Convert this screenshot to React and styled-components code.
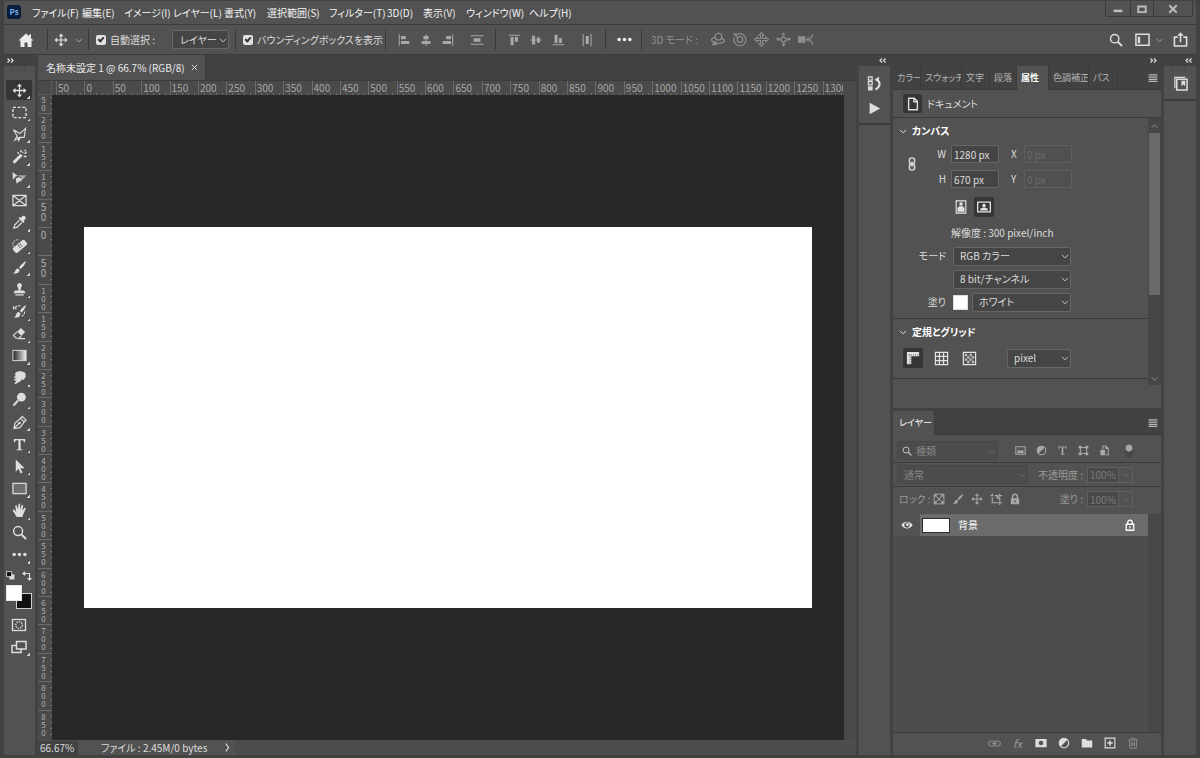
import React from "react";
import styled, { createGlobalStyle, css } from "styled-components";

const c = {
  panel: "#525252",
  dark: "#424242",
  line: "#3b3b3b",
  field: "#454545",
  ruler: "#4a4a4a",
  text: "#dcdcdc",
  dim: "#858585",
  edge: "#666666",
};

const Global = createGlobalStyle`
  *, *::before, *::after { box-sizing: border-box; }
  body { margin: 0; background: #333; }
  body, button, input, select {
    font-family: "Noto Sans CJK JP", "Noto Sans", sans-serif;
    font-size: 10px;
    line-height: 14px;
    font-feature-settings: "palt";
    color: ${c.text};
  }
  h2 { margin: 0; font-size: 10px; line-height: 14px; color: #fff; }
`;

const PlainButton = styled.button`
  display: flex;
  align-items: center;
  justify-content: center;
  border: 0;
  padding: 0;
  background: none;
  white-space: nowrap;
`;

/* ---------- window frame ---------- */
const Window = styled.div`
  display: flex;
  flex-direction: column;
  height: 100vh;
  min-height: 700px;
  padding: 1px 4px 3px;
  background: ${c.dark};
  overflow: hidden;
`;
const MenuBar = styled.header`
  display: flex;
  flex: 0 0 24px;
  padding-left: 3px;
  background: ${c.panel};
  border-bottom: 1px solid ${c.line};
`;
const Logo = styled.svg`
  width: 14px;
  height: 14px;
  margin: 4px 11px 0 0;
`;
const Menus = styled.nav`
  display: flex;
  flex: 1;
`;
const MenuItem = styled(PlainButton)`
  flex: 0 0 ${(p) => p.$w}px;
  justify-content: flex-start;
  color: #f4f4f4;
`;
const WindowButtons = styled.div`
  display: flex;
  height: 16px;
  margin-right: 3px;
  border: 1px solid ${c.line};
  border-top: 0;
  border-radius: 0 0 2px 2px;
`;
const WindowButton = styled(PlainButton)`
  width: ${(p) => p.$w}px;
  color: #bdbdbd;
  & + & { border-left: 1px solid ${c.line}; }
`;

/* ---------- options bar ---------- */
const OptionsBar = styled.div`
  display: flex;
  flex: 0 0 30px;
  background: ${c.panel};
  border-bottom: 1px solid ${c.line};
`;
const Group = styled.div`
  display: flex;
  align-items: center;
  flex: ${(p) => (p.$w ? `0 0 ${p.$w}px` : "1 0 auto")};
  padding-left: ${(p) => p.$pad || 0}px;
  gap: ${(p) => p.$gap || 0}px;
  justify-content: ${(p) => (p.$center ? "center" : "flex-start")};
  position: relative;
  white-space: nowrap;
  &::after {
    content: "";
    display: ${(p) => (p.$w ? "block" : "none")};
    position: absolute;
    right: 0;
    top: 4px;
    bottom: 4px;
    width: 1px;
    background: ${c.line};
  }
`;
const IconButton = styled(PlainButton)`
  width: ${(p) => p.$w || 22}px;
  height: 20px;
  flex: none;
  color: ${(p) => p.$color || "#a8a8a8"};
  margin-left: ${(p) => p.$ml || 0}px;
`;
const Check = styled.label`
  display: flex;
  align-items: center;
  gap: 4px;
`;
const CheckBox = styled.input`
  appearance: none;
  position: relative;
  width: 10px;
  height: 10px;
  margin: 0;
  border-radius: 2px;
  background: #e2e2e2;
  &:checked::after {
    content: "";
    position: absolute;
    left: 3px;
    top: 1px;
    width: 4px;
    height: 6px;
    border: solid #333;
    border-width: 0 2px 2px 0;
    transform: rotate(42deg);
  }
`;
const ModeLabel = styled.span`
  width: 55px;
  color: #8f8f8f;
`;
const BarRight = styled.div`
  display: flex;
  align-items: center;
`;

/* ---------- body ---------- */
const Body = styled.div`
  display: flex;
  flex: 1;
  min-height: 0;
  gap: 3px;
`;
const Column = styled.div`
  display: flex;
  flex-direction: column;
  flex: 0 0 ${(p) => p.$w}px;
  min-height: 0;
`;
const Collapse = styled(PlainButton)`
  flex: 0 0 11px;
  justify-content: ${(p) => (p.$left ? "flex-start" : "flex-end")};
  padding: 0 4px 0 3px;
  color: #e0e0e0;
`;
const Grip = styled.div`
  width: 16px;
  height: 3px;
  margin: 2px auto 0;
  background: repeating-linear-gradient(90deg, #444 0 1px, #5a5a5a 1px 2px);
`;
const Toolbar = styled.div`
  flex: 1;
  display: flex;
  flex-direction: column;
  background: ${c.panel};
`;
const Tools = styled.div`
  display: grid;
  grid-template-rows: repeat(22, 1fr);
  height: 487px;
  margin-top: 8px;
`;
const Tool = styled(PlainButton)`
  position: relative;
  width: 26px;
  min-height: 20px;
  margin: 1px 0 1px 2px;
  border-radius: 2px;
  color: #dedede;
  background: ${(p) => (p.$active ? "#353535" : "none")};
  &::after {
    content: "";
    display: ${(p) => (p.$more ? "block" : "none")};
    position: absolute;
    right: 2px;
    bottom: 1px;
    width: 3px;
    height: 3px;
    background: linear-gradient(135deg, transparent 50%, #d0d0d0 50%);
  }
`;
const MiniRow = styled.div`
  display: flex;
  justify-content: space-between;
  width: 26px;
  margin: 5px 0 4px 2px;
  color: #dedede;
`;
const Swatches = styled.div`
  position: relative;
  width: 26px;
  height: 24px;
  margin: 0 0 5px 2px;
`;
const Swatch = styled.button`
  position: absolute;
  width: 16px;
  height: 16px;
  padding: 0;
  ${(p) =>
    p.$front
      ? css`left: 0; top: 0; background: #fff; border: 1px solid #e8e8e8;`
      : css`right: 0; bottom: 0; background: #111; border: 1px solid #d0d0d0;`}
`;

/* ---------- document ---------- */
const Document = styled.main`
  flex: 1;
  min-width: 0;
  display: flex;
  flex-direction: column;
`;
const DocTabs = styled.div`
  flex: 0 0 25px;
  display: flex;
`;
const DocTab = styled.div`
  display: flex;
  align-items: center;
  gap: 6px;
  width: 168px;
  padding-left: 8px;
  background: ${c.panel};
  border-right: 1px solid ${c.line};
  color: #ececec;
  white-space: nowrap;
`;
const RulerRow = styled.div`
  flex: 0 0 15px;
  min-height: 0;
  display: flex;
  padding-right: 13px;
  background: ${c.ruler};
  border-top: 1px solid ${c.line};
`;
const Corner = styled.div`
  flex: 0 0 14px;
  border-right: 1px dotted #6a6a6a;
  border-bottom: 1px dotted #6a6a6a;
`;
const HRuler = styled.div`
  flex: 1;
  min-width: 0;
  overflow: hidden;
  padding-left: 4px;
`;
const HMarks = styled.div`
  display: grid;
  grid-template-columns: repeat(28, 1fr);
  width: 795px;
  height: 100%;
`;
const HMark = styled.span`
  min-width: 0;
  padding-left: 1px;
  line-height: 14px;
  color: #a6a6a6;
  border-left: 1px solid #6c6c6c;
  background: repeating-linear-gradient(90deg, transparent 0 5px, #707070 5px 6px) 0 100% / 100% 2px no-repeat;
`;
const Work = styled.div`
  flex: 1;
  display: flex;
  min-height: 0;
`;
const VRuler = styled.div`
  flex: 0 0 14px;
  display: flex;
  flex-direction: column;
  justify-content: flex-end;
  overflow: hidden;
  padding-bottom: 2px;
  background: ${c.ruler};
`;
const VMarks = styled.div`
  flex: none;
  display: grid;
  grid-template-rows: repeat(23, 1fr);
  height: 653px;
`;
const VMark = styled.div`
  min-height: 0;
  padding: 2px 0 0 0;
  color: #b0b0b0;
  border-top: 1px solid #6c6c6c;
  background: repeating-linear-gradient(180deg, transparent 0 5px, #707070 5px 6px) 100% 0 / 2px 100% no-repeat;
  span {
    display: block;
    width: 10px;
    writing-mode: vertical-rl;
    text-orientation: upright;
    line-height: 10px;
    font-size: ${(p) => (p.$tight ? 8 : 10)}px;
  }
`;
const Stage = styled.div`
  flex: 1;
  display: flex;
  align-items: center;
  justify-content: center;
  background: #282828;
`;
const Artboard = styled.div`
  width: 728px;
  max-width: 92%;
  aspect-ratio: 728 / 381;
  background: #fff;
`;
const ScrollGutter = styled.div`
  flex: 0 0 12px;
  background: ${c.ruler};
`;
const Status = styled.footer`
  flex: 0 0 15px;
  display: flex;
  align-items: center;
  background: #4d4d4d;
`;
const Zoom = styled.span`
  width: 40px;
  padding-left: 2px;
  background: ${c.dark};
`;
const FileInfo = styled.button`
  display: flex;
  justify-content: space-between;
  align-items: center;
  width: 157px;
  height: 100%;
  padding: 0 3px 0 23px;
  border: 0;
  background: ${c.panel};
`;

/* ---------- panels ---------- */
const Strip = styled.div`
  flex: ${(p) => (p.$h ? `0 0 ${p.$h}px` : 1)};
  background: ${c.panel};
  border-bottom: ${(p) => (p.$h ? `2px solid ${c.line}` : 0)};
  display: flex;
  flex-direction: column;
  align-items: center;
`;
const StripButton = styled(PlainButton)`
  height: 25px;
  width: 24px;
  color: #dedede;
`;
const Panel = styled.section`
  display: flex;
  flex-direction: column;
  flex: ${(p) => (p.$h ? `0 0 ${p.$h}px` : 1)};
  min-height: 0;
  margin-bottom: ${(p) => (p.$h ? 3 : 0)}px;
  background: ${c.panel};
`;
const Tabs = styled.div`
  display: flex;
  flex: 0 0 24px;
  background: ${c.dark};
  border-bottom: 1px solid ${c.line};
`;
const Tab = styled.button`
  flex: 0 0 ${(p) => p.$w}px;
  padding: 0 0 0 ${(p) => (p.$plain ? 6 : 4)}px;
  overflow: hidden;
  white-space: nowrap;
  text-align: left;
  font-size: 9px;
  border: 0;
  border-right: 1px solid ${c.line};
  margin-bottom: ${(p) => (p.$active ? -1 : 0)}px;
  background: ${(p) => (p.$active ? c.panel : "none")};
  color: ${(p) => (p.$active ? "#fff" : "#b4b4b4")};
  font-weight: ${(p) => (p.$active && !p.$plain ? 700 : 400)};
`;
const PanelMenu = styled(PlainButton)`
  margin-left: auto;
  width: 17px;
  color: #b8b8b8;
`;
const DocHead = styled.div`
  flex: 0 0 28px;
  display: flex;
  align-items: center;
  gap: 5px;
  padding-left: 10px;
  border-bottom: 1px solid ${c.line};
`;
const IconTile = styled.span`
  display: flex;
  align-items: center;
  justify-content: center;
  width: 19px;
  height: 19px;
  border-radius: 2px;
  background: #353535;
`;
const Scroller = styled.div`
  display: flex;
  height: 267px;
`;
const Sections = styled.div`
  flex: 1;
  min-width: 0;
`;
const Section = styled.div`
  padding: 5px 0 0 5px;
  height: ${(p) => p.$h}px;
  border-bottom: 1px solid ${c.line};
`;
const Heading = styled.div`
  display: flex;
  align-items: center;
  gap: 4px;
  height: 15px;
`;
const CanvasGrid = styled.div`
  display: grid;
  grid-template-columns: 28px 25px auto;
  align-items: center;
  padding-top: 1px;
`;
const LinkCell = styled(PlainButton)`
  grid-row: 1 / span 2;
  color: #dedede;
`;
const RowLabel = styled.label`
  justify-self: end;
  padding-right: 5px;
  white-space: nowrap;
  grid-column: 2;
`;
const Cell = styled.div`
  grid-column: 3;
  display: flex;
  align-items: center;
  gap: ${(p) => p.$gap || 0}px;
  height: ${(p) => p.$h}px;
  padding-left: ${(p) => p.$pad || 0}px;
`;
const Field = styled.input`
  width: 48px;
  height: 18px;
  padding: 0 2px;
  border: 1px solid ${c.edge};
  border-radius: 1px;
  background: ${c.field};
  &:disabled {
    color: #6c6c6c;
    background: #505050;
    border-color: #5e5e5e;
  }
`;
const AxisLabel = styled.label`
  width: 25px;
  padding-left: 12px;
`;
const OrientButton = styled(PlainButton)`
  width: 20px;
  height: 20px;
  border-radius: 2px;
  color: #e2e2e2;
  background: ${(p) => (p.$active ? "#353535" : "none")};
`;
const ColorChip = styled.button`
  width: 15px;
  height: 15px;
  padding: 0;
  border: 1px solid #ddd;
  background: #fff;
`;
const SelectBox = styled.span`
  display: grid;
  align-items: center;
  flex: none;
  width: ${(p) => p.$w}px;
  height: 19px;
  svg {
    grid-area: 1 / 1;
    justify-self: end;
    margin-right: 1px;
    pointer-events: none;
    color: ${(p) => (p.$dim ? "#6e6e6e" : "#c4c4c4")};
  }
  select {
    grid-area: 1 / 1;
    appearance: none;
    width: 100%;
    height: 19px;
    padding: 0 0 0 ${(p) => p.$pad || 6}px;
    border: 1px solid ${(p) => (p.$dim ? "#484848" : c.edge)};
    border-radius: 2px;
    background: ${(p) => (p.$dim ? "#4c4c4c" : c.field)};
    color: ${(p) => (p.$dim ? c.dim : c.text)};
    opacity: 1;
  }
  .lead { justify-self: start; margin-left: 5px; color: #c0c0c0; }
`;
const GridRow = styled.div`
  display: flex;
  align-items: center;
  gap: 8px;
  margin: 9px 0 0 5px;
`;
const GridSelect = styled.div`
  margin-left: 20px;
`;
const ScrollBar = styled.div`
  flex: 0 0 13px;
  display: flex;
  flex-direction: column;
  align-items: center;
  padding: 4px 0 2px;
  background: #464646;
  color: #9a9a9a;
`;
const Thumb = styled.div`
  width: 11px;
  height: 162px;
  margin: 2px 0 auto;
  background: #696969;
`;
const LayerRow = styled.div`
  flex: 0 0 ${(p) => p.$h}px;
  display: flex;
  align-items: center;
  padding: ${(p) => p.$top || 0}px 0 ${(p) => (p.$last ? 3 : 0)}px 4px;
  color: #9a9a9a;
  white-space: nowrap;
  border-bottom: ${(p) => (p.$last ? 0 : `1px solid ${c.line}`)};
`;
const FilterIcons = styled.div`
  display: flex;
  padding-left: 12px;
`;
const Toggle = styled.button`
  width: 8px;
  height: 14px;
  margin: 0 0 0 10px;
  padding: 0;
  border: 0;
  border-radius: 4px;
  background: radial-gradient(circle at 4px 4px, #a5a5a5 0 3px, #474747 4px);
`;
const Amount = styled.label`
  display: flex;
  align-items: center;
  justify-content: flex-end;
  gap: 4px;
  flex: 0 0 ${(p) => p.$w}px;
`;
const AmountInput = styled.input`
  width: 32px;
  height: 16px;
  padding: 0 2px;
  border: 1px solid #606060;
  background: #494949;
  color: #7a7a7a;
`;
const AmountMore = styled(PlainButton)`
  width: 14px;
  height: 16px;
  border: 1px solid #606060;
  border-left: 0;
  color: #6e6e6e;
`;
const LockLabel = styled.span`
  width: 32px;
  padding-left: 2px;
`;
const LayerList = styled.div`
  flex: 1;
  display: flex;
  background: #4d4d4d;
`;
const Layers = styled.div`
  flex: 1;
`;
const Layer = styled.div`
  display: flex;
  height: 22px;
  background: ${c.panel};
`;
const Eye = styled(PlainButton)`
  width: 27px;
  color: #ececec;
`;
const LayerBody = styled.div`
  flex: 1;
  display: flex;
  align-items: center;
  padding: 0 12px 0 2px;
  background: #6b6b6b;
  color: #fff;
`;
const LayerThumb = styled.span`
  width: 28px;
  height: 15px;
  margin-right: 8px;
  background: #fff;
  border: 1px solid #2c2c2c;
`;
const LayerName = styled.span`
  flex: 1;
`;
const ListGutter = styled.div`
  flex: 0 0 13px;
  background: #484848;
`;
const LayerFooter = styled.div`
  flex: 0 0 22px;
  display: flex;
  align-items: center;
  justify-content: flex-end;
  padding: 0 17px 2px 0;
  border-top: 1px solid ${c.line};
`;
const Fx = styled.i`
  font-size: 11px;
`;

/* ---------- icons ---------- */
const Svg = ({ s = 16, children, ...rest }) => (
  <svg width={s} height={s} viewBox="0 0 16 16" fill="currentColor" stroke="none" aria-hidden="true" {...rest}>
    {children}
  </svg>
);
const line = { fill: "none", stroke: "currentColor", strokeWidth: 1.3 };

const Chevron = ({ s = 10, ...rest }) => (
  <Svg s={s} {...rest}><path d="M3 6l5 5 5-5" {...line} strokeWidth="1.6" /></Svg>
);
const Chevrons = ({ right }) => (
  <svg width="7" height="5" viewBox="0 0 7 5" fill="none" stroke="currentColor" strokeWidth="1.2" aria-hidden="true">
    <path d={right ? "M0.5 0.5l2 2-2 2M4 0.5l2 2-2 2" : "M3 0.5l-2 2 2 2M6.5 0.5l-2 2 2 2"} />
  </svg>
);
const Burger = () => <Svg s={10}><path d="M1 2h14v2H1zM1 5.500h14v2H1zM1 9h14v2H1zM1 12.500h14v2H1z" /></Svg>;

const shapes = {
  move: <path d="M8 0.500l2.800 3.200H8.700v3.600h3.600V5.200L15.500 8l-3.200 2.800V8.700H8.700v3.600h2.100L8 15.500l-2.800-3.200h2.100V8.700H3.700v2.100L0.500 8l3.200-2.800v2.100h3.600V3.700H5.200z" />,
  marquee: <path d="M1 2.500h14v11H1z" {...line} strokeWidth="1.500" strokeDasharray="3.200 1.800" />,
  lasso: <path d="M1.500 3L8.500 7 14.500 1.500 13 11H8L3 14l2.500-4.500zM5 9.500L7 14.500l2-3.500" {...line} strokeWidth="1.200" />,
  wand: <><path d="M0.500 13.500L9 5l2.300 2.300-8.500 8.500z" /><path d="M6 3.500L7.500 5M9.500 1v2.500M13.500 5l2-2M12.500 8h3M11 4l1-1M14 0.500v2" {...line} strokeWidth="1.400" /></>,
  slice: <><path d="M0.500 1L6 5 3.500 6 1 9.500zM4 8l4-1.500 2 2.500L5 13.500z" /><path d="M6 4.500h9.500L9 12l-1-3 2-2z" opacity=".6" /></>,
  frame: <path d="M1 2.500h14v11H1zM1 2.500l14 11M15 2.500L1 13.500" {...line} />,
  dropper: <><path d="M10 2.500c1.500-2 3-2 4-1s1 2.500-1 4l-.5.500 1 1-1.500 1.500-5-5 1.500-1.500 1 1z" /><path d="M8 5.500L3 10.500l-1 3.500 3.500-1 5-5" {...line} /></>,
  heal: <><rect x="0.500" y="5.500" width="16" height="7" rx="2" transform="rotate(-40 8.500 9)" /><path d="M6.500 7.500l1 1M8.500 6l1 1M8 9.500l1 1M10 8l1 1" stroke="#525252" strokeWidth="1.300" /><path d="M1.500 9a5 5 0 0 1 6-7" {...line} strokeWidth="1.100" strokeDasharray="1.500 1.200" /></>,
  brush: <path d="M15 1c-3 1.500-6 4.500-7.500 7l1.500 1.500C11.500 8 14 4.500 15 1zM6.500 9c-2 0-2.500 1-3 2.500C3.200 12.800 2.500 13.500 1 14c3 1 7 .5 7-3.500z" />,
  stamp: <path d="M8 1a2.800 2.800 0 0 0-1.500 5L7 9H3.500L2 10.500V12h12v-1.500L12.500 9H9l.5-3A2.800 2.800 0 0 0 8 1zM3.500 13h9v1.500h-9z" />,
  history: <><path d="M15 1c-3 1.500-5 4-6.500 6.500L10 9C12 7.500 14 5 15 1zM7.500 8.500c-2 0-2.500 1-3 2.500C4.200 12.800 3.500 13.500 2 14c3 1 7 .5 7-4z" /><path d="M1.500 5.500L1.500 2M2 5h3.500M3 4a6 6 0 0 1 6-2M13.500 8c0 2-1 4-3 5" {...line} strokeWidth="1.200" strokeDasharray="3 1" /></>,
  eraser: <><path d="M9.500 2L14 6.500 10 10.500 5.500 6z" /><path d="M5.500 6l-4 4 3 3h3L10 10.500M7 13.500h7" {...line} strokeWidth="1.200" /></>,
  gradient: <><defs><linearGradient id="toolGradient"><stop offset="0" stopColor="#222" /><stop offset="1" stopColor="#eee" /></linearGradient></defs><rect x="1" y="2.500" width="14" height="11" fill="url(#toolGradient)" stroke="currentColor" /></>,
  smudge: <path d="M4 2.500C6 1 9 1 11 1.500c2 .5 3.500 1.500 3.500 3v3l-2 3-2-.5-1.500 2-1 .5L4 15l-1.500-.5L5 11l-2 .5-1-1L5 8l-2.500.5-.5-1L4.500 6 3 5.500z" />,
  dodge: <><circle cx="10" cy="5.500" r="4.700" /><path d="M6.500 9L1.500 14.500" stroke="currentColor" strokeWidth="2.200" /></>,
  pen: <><path d="M2 14.500l1.200-6L9 3.500l4 4-4.500 6zM9 3.500L11 1.500l4 4-2 2M2 14.500L7.500 9" {...line} /><circle cx="8" cy="8.500" r="1.400" /></>,
  type: <path d="M2 2h12v3.500h-1.200C12.500 4 12 3.400 10.500 3.400H9.200v8.800c0 .8.400 1 2 1.100V14H4.800v-.7c1.600-.1 2-.3 2-1.100V3.400H5.500C4 3.400 3.500 4 3.200 5.500H2z" />,
  arrow: <path d="M4 0.500v13l3-3L9.200 15.500l2-1L9 9.800h4.500z" />,
  rect: <rect x="1" y="2.500" width="14" height="11" {...line} fill="#6e6e6e" />,
  hand: <path d="M5 15L1 8.500c-.6-1.200 1-2 1.800-1L4.500 9.500 3.500 3.500c-.1-1.200 1.500-1.400 1.800-.2L6.500 7 6.800 1.500c.1-1.200 1.800-1.200 1.800 0L8.800 7l1.400-4.500c.4-1.200 1.900-.8 1.700.4L11 8l2-2.500c.9-.9 2 0 1.500 1L12 12l-1 3z" />,
  zoom: <><circle cx="6.500" cy="6.500" r="4.800" {...line} strokeWidth="1.600" /><path d="M10 10l5 5" stroke="currentColor" strokeWidth="2.200" /></>,
  dots: <><circle cx="2.300" cy="8" r="1.900" /><circle cx="8" cy="8" r="1.900" /><circle cx="13.700" cy="8" r="1.900" /></>,
  quickMask: <><rect x="1.500" y="2.500" width="13" height="11" {...line} /><circle cx="8" cy="8" r="3.300" {...line} strokeDasharray="1.500 1" /></>,
  screenMode: <><rect x="1" y="6.500" width="9" height="7" {...line} strokeWidth="1.500" /><rect x="5.500" y="2.500" width="9.500" height="7.500" {...line} strokeWidth="1.500" fill="#525252" /></>,
  home: <path d="M8 1.500L0.500 8.500h2V15h4v-4.500h3V15h4V8.500h2L13 6.200V2.500h-2v1.800z" />,
  alignL: <path d="M2 1.500h1.200v13H2zM4.500 3.500H10v3.500H4.500zM4.500 9H14v3.500H4.500z" />,
  alignC: <path d="M7.400 1.500h1.200v2H11V7H8.600v2H13v3.500H8.600v2H7.400v-2H3V9h4.400V7H5V3.500h2.400z" />,
  alignR: <path d="M12.800 1.500H14v13h-1.200zM6 3.500h5.500V7H6zM2 9h9.500v3.500H2z" />,
  distH: <path d="M0.500 2.500h15v1.200h-15zM4 6h8v4H4zM0.500 12.300h15v1.200h-15z" />,
  alignT: <path d="M2 2h13v1.200H2zM4 4.500h3.500V14H4zM9 4.500h3.500V10H9z" />,
  alignM: <path d="M3.500 3H7v4.400h2V5h3.500v2.400h2v1.200h-2V11H9V8.600H7V13H3.500V8.600h-2V7.400h2z" />,
  alignB: <path d="M2 12.800h13V14H2zM4 2h3.500v9.500H4zM9 6h3.500v5.500H9z" />,
  distV: <path d="M3 1h1.200v14H3zM6.500 3.500h3.500v9H6.500zM12 1h1.200v14H12z" />,
  orbit: <><circle cx="9" cy="5" r="3.500" {...line} /><path d="M5.500 5.500C1 6.500 0 9.500 4.500 11c3 1 8 1.200 10-.2 1.800-1.500.5-3.300-2-4" {...line} strokeWidth="1.400" /><path d="M2 14l6.500-.5L4.500 9z" /></>,
  roll: <><circle cx="8.500" cy="8" r="3" {...line} /><path d="M6 2.200A6.500 6.500 0 1 1 2.500 5.500" {...line} /><path d="M0.500 1.500h5v4.500z" /></>,
  pan: <path d="M8 0.500L10.500 3.500H9v3.500h3.500V5.500L15.500 8l-3 2.500V9H9v3.500h1.500L8 15.500l-2.500-3H7V9H3.500v1.500L0.500 8l3-2.500V7H7V3.500H5.500z" {...line} strokeWidth="1.100" />,
  slide: <><path d="M8 4.500L11.500 8 8 11.500 4.500 8z" {...line} /><path d="M8 0.500L10.300 3H5.700zM8 15.500l-2.500-3h5zM0 6.500l4-.5-1.500 4zM16 6.500L12 6l1.500 4z" /></>,
  camera: <><path d="M0 4.500h8v7H0zM8.500 8l3-3v6z" /><path d="M15.500 2.500v1.500M15.500 12v1.500M15.500 3.500L12.500 8l3 4.500" {...line} /></>,
  workspace: <><path d="M1 2.500h14v11.500H1z" {...line} strokeWidth="1.600" /><path d="M3 5h2.500v7H3z" /></>,
  share: <><path d="M5 5.500H1.500V15h13V5.500H11" {...line} strokeWidth="1.700" /><path d="M8 11V3" {...line} strokeWidth="1.700" /><path d="M4.500 4L8 .2 11.500 4z" /></>,
  historyPanel: <><path d="M1.500 1h4v3.500h-4zM1.500 6h4v3.500h-4z" {...line} /><path d="M1 11h5v4.500H1z" /><path d="M9 14.500c5-3 6-8 1.500-10.500" {...line} strokeWidth="2.200" /><path d="M8 4L13 0.500 12.500 7z" /></>,
  play: <path d="M2 1l13 7-13 7z" />,
  library: <><path d="M4 3.500h11V15H4z" {...line} strokeWidth="1.600" /><path d="M2 13V1.500h11" {...line} strokeWidth="1.300" /><path d="M9 5h4v6l-2-2-2 2z" /></>,
  page: <path d="M3 1.500h6.500L13 5v9.500H3zM9 1.500V5.500h4" {...line} strokeWidth="1.600" />,
  link: <><rect x="5" y="1" width="6" height="7" rx="3" {...line} strokeWidth="1.600" /><rect x="5" y="8" width="6" height="7" rx="3" {...line} strokeWidth="1.600" /><path d="M8 5v6" {...line} strokeWidth="1.600" /></>,
  portrait: <><path d="M2.500 1h11v14h-11z" {...line} /><circle cx="8" cy="4.700" r="2" /><path d="M4 13.500V9l2-2h4l2 2v4.500z" /></>,
  landscape: <><path d="M0.800 2.500h14.400v11H.8z" {...line} strokeWidth="1.500" /><circle cx="8" cy="6.300" r="2" /><path d="M3.500 12c0-2.500 1.500-3.500 4.500-3.500s4.500 1 4.500 3.500z" /></>,
  rulers: <><path d="M1 1h14v5H6v9H1z" /><path d="M3 4.500h11M4.500 4v11" stroke="#444" strokeDasharray="1 1.500" /></>,
  grid: <path d="M1.500 1.500h13v13h-13zM5.800 1.500v13M10.200 1.500v13M1.500 5.800h13M1.500 10.200h13" {...line} />,
  checker: <><path d="M1.500 1.500h13v13h-13z" {...line} /><path opacity=".75" d="M3 3h2.500v2.500H3zM8 3h2.500v2.500H8zM5.500 5.500H8V8H5.500zM10.500 5.500H13V8h-2.500zM3 8h2.500v2.500H3zM8 8h2.500v2.500H8zM5.500 10.500H8V13H5.500zM10.500 10.500H13V13h-2.500z" /></>,
  checkerLock: <><path d="M1.500 1.500h13v13h-13z" {...line} strokeWidth="1.300" /><path d="M2 2h3v3H2zM11 2h3v3h-3zM6.500 6.500h3v3h-3zM2 11h3v3H2zM11 11h3v3h-3zM5 5h1.500v1.500H5zM9.500 5H11v1.500H9.500zM5 9.500h1.500V11H5zM9.500 9.500H11V11H9.500z" /></>,
  image: <><path d="M1.200 2.500h13.600v11H1.200z" {...line} strokeWidth="1.600" /><path d="M3.500 12V9l2-2.500L8 9l2.500-2.500 2 2.500v3z" /></>,
  adjust: <><circle cx="8" cy="8" r="6.300" {...line} strokeWidth="1.500" /><path d="M3.500 12.500A6.300 6.300 0 0 1 12.500 3.500z" /></>,
  transform: <><path d="M3.500 3.500h9v9h-9z" {...line} strokeWidth="1.500" /><path d="M1 1h4v4H1zM11 1h4v4h-4zM1 11h4v4H1zM11 11h4v4h-4z" /></>,
  smart: <><path d="M5.500 6V1.500H10L13.500 5v9.500H10M10 1.500V5h3.500" {...line} strokeWidth="1.500" /><path d="M2 7h7v8H2z" /></>,
  artboard: <path d="M3 0.500v3M0.500 3.500h4M3 5.500v7.500h10M13 13v3M13 13h3M6.500 3.500H10L13 6.500v5M9.500 3.500v3.500H13M12.500 1v2.500H16" {...line} strokeWidth="1.500" />,
  lock: <><path d="M2.500 7h11v8h-11z" /><path d="M4.800 7V5a3.200 3.200 0 0 1 6.400 0v2" {...line} strokeWidth="2" /><path d="M7.200 9.500h1.600v3H7.200z" fill="#525252" /></>,
  lockOutline: <><path d="M3 7h10v8H3z" {...line} strokeWidth="1.700" /><path d="M5 7V4.500a3 3 0 0 1 6 0V7" {...line} strokeWidth="1.700" /><path d="M7.200 9.300h1.600v3.500H7.200z" /></>,
  eye: <><path d="M0.500 8C4 2 12 2 15.500 8 12 14 4 14 .5 8z" /><circle cx="8" cy="8" r="3.600" fill="#525252" /><circle cx="8.500" cy="7.500" r="1.900" /></>,
  chain: <><rect x=".8" y="5" width="8" height="6" rx="3" {...line} /><rect x="7.200" y="5" width="8" height="6" rx="3" {...line} /><path d="M5 8h6" {...line} /></>,
  mask: <path fillRule="evenodd" d="M0.500 2.500h15v11H.5zM8 5a3 3 0 1 0 0 6 3 3 0 0 0 0-6z" />,
  folder: <path d="M1 2.500h5.500L8 4.500h7v9.500H1z" />,
  plus: <><path d="M1.500 1.500h13v13h-13z" {...line} strokeWidth="1.500" /><path d="M7 4.500h2V7h2.500v2H9v2.500H7V9H4.500V7H7z" /></>,
  trash: <path d="M1.500 4h13M5.500 4V1.500h5V4M3 4l.8 11h8.400L13 4M6 6.500v6M8 6.500v6M10 6.500v6" {...line} />,
};
const Icon = ({ n, s = 16, ...rest }) => <Svg s={s} {...rest}>{shapes[n]}</Svg>;

const Select = ({ w, pad, dim, label, lead, value, id }) => (
  <SelectBox $w={w} $pad={pad} $dim={dim}>
    <select id={id} aria-label={label} disabled={dim} defaultValue={value}>
      <option>{value}</option>
    </select>
    {lead && <Icon n={lead} s={10} className="lead" />}
    <Chevron />
  </SelectBox>
);

/* ---------- data ---------- */
const menus = [
  ["ファイル(F)", 50], ["編集(E)", 42], ["イメージ(I)", 49], ["レイヤー(L)", 51], ["書式(Y)", 43], ["選択範囲(S)", 62],
  ["フィルター(T)", 58], ["3D(D)", 36], ["表示(V)", 43], ["ウィンドウ(W)", 63], ["ヘルプ(H)", 50],
];
const tools = [
  ["move", "移動"], ["marquee", "選択"], ["lasso", "なげなわ"], ["wand", "自動選択"], ["slice", "スライス"], ["frame", "フレーム"],
  ["dropper", "スポイト"], ["heal", "修復"], ["brush", "ブラシ"], ["stamp", "スタンプ"], ["history", "ヒストリーブラシ"],
  ["eraser", "消しゴム"], ["gradient", "グラデーション"], ["smudge", "指先"], ["dodge", "覆い焼き"], ["pen", "ペン"],
  ["type", "文字"], ["arrow", "パス選択"], ["rect", "長方形"], ["hand", "手のひら"], ["zoom", "ズーム"], ["dots", "その他"],
];
const noFlyout = ["frame", "zoom"];
const hMarks = Array.from({ length: 28 }, (_, i) => Math.abs(i * 50 - 50));
const vMarks = Array.from({ length: 23 }, (_, i) => Math.abs(i * 50 - 250));
const panelTabs = [["カラー", 28], ["スウォッチ", 41], ["文字", 28], ["段落", 27], ["属性", 32], ["色調補正", 40], ["パス", 29]];

const PropertiesPanel = () => (
  <Panel $h={342}>
    <Tabs>
      {panelTabs.map(([t, w]) => <Tab key={t} $w={w} $active={t === "属性"}>{t}</Tab>)}
      <PanelMenu aria-label="パネルメニュー"><Burger /></PanelMenu>
    </Tabs>
    <DocHead><IconTile><Icon n="page" s={14} /></IconTile>ドキュメント</DocHead>
    <Scroller>
      <Sections>
        <Section $h={201}>
          <Heading><Chevron /><h2>カンバス</h2></Heading>
          <CanvasGrid>
            <LinkCell aria-label="縦横比を固定"><Icon n="link" s={14} /></LinkCell>
            <RowLabel htmlFor="w">W</RowLabel>
            <Cell $h={30}>
              <Field id="w" defaultValue="1280 px" />
              <AxisLabel htmlFor="x">X</AxisLabel>
              <Field id="x" defaultValue="0 px" disabled />
            </Cell>
            <RowLabel htmlFor="h">H</RowLabel>
            <Cell $h={20}>
              <Field id="h" defaultValue="670 px" />
              <AxisLabel htmlFor="y">Y</AxisLabel>
              <Field id="y" defaultValue="0 px" disabled />
            </Cell>
            <Cell $h={36} $gap={3}>
              <OrientButton aria-label="縦"><Icon n="portrait" s={14} /></OrientButton>
              <OrientButton aria-label="横" $active><Icon n="landscape" s={14} /></OrientButton>
            </Cell>
            <Cell $h={16}>解像度 : 300 pixel/inch</Cell>
            <RowLabel htmlFor="mode">モード</RowLabel>
            <Cell $h={30} $pad={2}><Select id="mode" w={118} value="RGB カラー" /></Cell>
            <Cell $h={16} $pad={2}><Select w={118} label="ビット数" value="8 bit/チャンネル" /></Cell>
            <RowLabel htmlFor="fill">塗り</RowLabel>
            <Cell $h={30} $pad={2} $gap={4}>
              <ColorChip aria-label="塗りの色" />
              <Select id="fill" w={99} value="ホワイト" />
            </Cell>
          </CanvasGrid>
        </Section>
        <Section $h={60}>
          <Heading><Chevron /><h2>定規とグリッド</h2></Heading>
          <GridRow>
            <OrientButton aria-label="定規" $active><Icon n="rulers" s={14} /></OrientButton>
            <OrientButton aria-label="グリッド"><Icon n="grid" s={15} /></OrientButton>
            <OrientButton aria-label="透明グリッド"><Icon n="checker" s={15} /></OrientButton>
            <GridSelect><Select w={64} label="単位" value="pixel" /></GridSelect>
          </GridRow>
        </Section>
      </Sections>
      <ScrollBar>
        <Chevron s={9} transform="rotate(180)" />
        <Thumb />
        <Chevron s={9} />
      </ScrollBar>
    </Scroller>
  </Panel>
);

const AmountField = ({ label, w }) => (
  <>
    <Amount $w={w}>{label} :<AmountInput defaultValue="100%" disabled /></Amount>
    <AmountMore aria-label={label}><Chevron s={9} /></AmountMore>
  </>
);

const LayersPanel = () => (
  <Panel>
    <Tabs>
      <Tab $w={42} $active $plain>レイヤー</Tab>
      <PanelMenu aria-label="パネルメニュー"><Burger /></PanelMenu>
    </Tabs>
    <LayerRow $h={28} $top={4}>
      <Select w={101} dim pad={18} lead="zoom" label="種類" value="種類" />
      <FilterIcons>
        {["image", "adjust", "type", "transform", "smart"].map((n) => (
          <IconButton key={n} $w={21} aria-label={n}><Icon n={n} s={11} /></IconButton>
        ))}
      </FilterIcons>
      <Toggle aria-label="フィルター" />
    </LayerRow>
    <LayerRow $h={24}>
      <Select w={131} dim label="描画モード" value="通常" />
      <AmountField w={91} label="不透明度" />
    </LayerRow>
    <LayerRow $h={27} $last>
      <LockLabel>ロック :</LockLabel>
      {["checkerLock", "brush", "move", "artboard", "lock"].map((n) => (
        <IconButton key={n} $w={19} aria-label={n}><Icon n={n} s={12} /></IconButton>
      ))}
      <AmountField w={95} label="塗り" />
    </LayerRow>
    <LayerList>
      <Layers>
        <Layer>
          <Eye aria-label="表示"><Icon n="eye" s={12} /></Eye>
          <LayerBody><LayerThumb /><LayerName>背景</LayerName><Icon n="lockOutline" s={12} /></LayerBody>
        </Layer>
      </Layers>
      <ListGutter />
    </LayerList>
    <LayerFooter>
      <IconButton $w={23} $color="#8a8a8a" aria-label="リンク"><Icon n="chain" s={13} /></IconButton>
      <IconButton $w={23} $color="#9a9a9a" aria-label="スタイル"><Fx>fx</Fx></IconButton>
      {["mask", "adjust", "folder", "plus"].map((n) => (
        <IconButton key={n} $w={23} $color="#dedede" aria-label={n}><Icon n={n} s={12} /></IconButton>
      ))}
      <IconButton $w={23} $color="#8a8a8a" aria-label="削除"><Icon n="trash" s={12} /></IconButton>
    </LayerFooter>
  </Panel>
);

export default function App() {
  return (
    <>
      <Global />
      <Window>
        <MenuBar>
          <Logo viewBox="0 0 14 14">
            <rect width="14" height="14" rx="3" fill="#0a1d3c" />
            <text x="7" y="10" textAnchor="middle" fontSize="8" fontWeight="700" fill="#6fb1e8">Ps</text>
          </Logo>
          <Menus>{menus.map(([t, w]) => <MenuItem key={t} $w={w}>{t}</MenuItem>)}</Menus>
          <WindowButtons>
            <WindowButton $w={24} aria-label="最小化"><Svg s={10}><path d="M1 9h14v4H1z" /></Svg></WindowButton>
            <WindowButton $w={23} aria-label="最大化"><Svg s={10}><path d="M2 4h12v9H2z" {...line} strokeWidth="3" /></Svg></WindowButton>
            <WindowButton $w={39} aria-label="閉じる"><Svg s={10}><path d="M2 2l12 12M14 2L2 14" {...line} strokeWidth="3" /></Svg></WindowButton>
          </WindowButtons>
        </MenuBar>

        <OptionsBar>
          <Group $w={44} $center><IconButton $color="#ececec" aria-label="ホーム"><Icon n="home" /></IconButton></Group>
          <Group $w={41} $pad={4}>
            <IconButton $w={18} $color="#dedede" aria-label="移動ツール"><Icon n="move" s={14} /></IconButton>
            <IconButton $w={17} aria-label="プリセット"><Chevron s={10} /></IconButton>
          </Group>
          <Group $w={147} $pad={7} $gap={17}>
            <Check><CheckBox type="checkbox" defaultChecked />自動選択 :</Check>
            <Select w={57} pad={7} label="自動選択の対象" value="レイヤー" />
          </Group>
          <Group $w={150} $pad={7}>
            <Check><CheckBox type="checkbox" defaultChecked />バウンディングボックスを表示</Check>
          </Group>
          <Group $w={110} $pad={7}>
            {["alignL", "alignC", "alignR"].map((n) => <IconButton key={n} aria-label={n}><Icon n={n} s={14} /></IconButton>)}
            <IconButton $ml={7} aria-label="distH"><Icon n="distH" s={14} /></IconButton>
          </Group>
          <Group $w={110} $pad={7}>
            {["alignT", "alignM", "alignB"].map((n) => <IconButton key={n} aria-label={n}><Icon n={n} s={14} /></IconButton>)}
            <IconButton $ml={7} aria-label="distV"><Icon n="distV" s={14} /></IconButton>
          </Group>
          <Group $w={36} $center><IconButton $color="#f0f0f0" aria-label="その他"><Icon n="dots" s={15} /></IconButton></Group>
          <Group $pad={9}>
            <ModeLabel>3D モード :</ModeLabel>
            {["orbit", "roll", "pan", "slide", "camera"].map((n) => (
              <IconButton key={n} $color="#8f8f8f" aria-label={n}><Icon n={n} s={15} /></IconButton>
            ))}
          </Group>
          <BarRight>
            <IconButton $color="#dedede" $w={26} aria-label="検索"><Icon n="zoom" s={14} /></IconButton>
            <IconButton $color="#dedede" $w={26} aria-label="ワークスペース"><Icon n="workspace" s={15} /></IconButton>
            <IconButton $w={9} aria-label="ワークスペースの選択"><Chevron s={10} /></IconButton>
            <IconButton $color="#dedede" $w={32} aria-label="共有"><Icon n="share" s={15} /></IconButton>
          </BarRight>
        </OptionsBar>

        <Body>
          <Column $w={31}>
            <Collapse $left aria-label="展開"><Chevrons right /></Collapse>
            <Toolbar>
              <Grip />
              <Tools>
                {tools.map(([n, label]) => (
                  <Tool key={n} $active={n === "move"} $more={!noFlyout.includes(n)} aria-label={label}><Icon n={n} s={15} /></Tool>
                ))}
              </Tools>
              <MiniRow>
                <Svg s={9}><path d="M6 6h9v9H6z" /><path d="M1 1h9v9H1z" fill="#111" stroke="currentColor" strokeWidth="1.500" /></Svg>
                <Svg s={10}><path d="M3 4h9v9" {...line} strokeWidth="1.800" /><path d="M0 4l5-4v8zM12 16l-4-5h8z" /></Svg>
              </MiniRow>
              <Swatches>
                <Swatch aria-label="背景色" />
                <Swatch $front aria-label="描画色" />
              </Swatches>
              <Tool aria-label="クイックマスク"><Icon n="quickMask" s={16} /></Tool>
              <Tool $more aria-label="スクリーンモード"><Icon n="screenMode" s={16} /></Tool>
            </Toolbar>
          </Column>

          <Document>
            <DocTabs><DocTab>名称未設定 1 @ 66.7% (RGB/8)<Svg s={7}><path d="M2 2l12 12M14 2L2 14" {...line} strokeWidth="2" /></Svg></DocTab></DocTabs>
            <RulerRow>
              <Corner />
              <HRuler><HMarks>{hMarks.map((m, i) => <HMark key={i}>{m}</HMark>)}</HMarks></HRuler>
            </RulerRow>
            <Work>
              <VRuler>
                <VMarks>
                  {vMarks.map((m, i) => <VMark key={i} $tight={m > 99}><span>{m}</span></VMark>)}
                </VMarks>
              </VRuler>
              <Stage><Artboard /></Stage>
              <ScrollGutter />
            </Work>
            <Status>
              <Zoom>66.67%</Zoom>
              <FileInfo>ファイル : 2.45M/0 bytes<Svg s={9}><path d="M5 1l5 7-5 7" {...line} strokeWidth="2" /></Svg></FileInfo>
            </Status>
          </Document>

          <Column $w={31}>
            <Collapse aria-label="展開"><Chevrons /></Collapse>
            <Strip $h={59}>
              <Grip />
              <StripButton aria-label="ヒストリー"><Icon n="historyPanel" s={15} /></StripButton>
              <StripButton aria-label="再生"><Icon n="play" s={13} /></StripButton>
            </Strip>
            <Strip />
          </Column>

          <Column $w={268}>
            <Collapse aria-label="折りたたむ"><Chevrons right /></Collapse>
            <PropertiesPanel />
            <LayersPanel />
          </Column>

          <Column $w={32}>
            <Collapse aria-label="展開"><Chevrons /></Collapse>
            <Strip $h={35}>
              <Grip />
              <StripButton aria-label="ライブラリ"><Icon n="library" s={15} /></StripButton>
            </Strip>
            <Strip />
          </Column>
        </Body>
      </Window>
    </>
  );
}
